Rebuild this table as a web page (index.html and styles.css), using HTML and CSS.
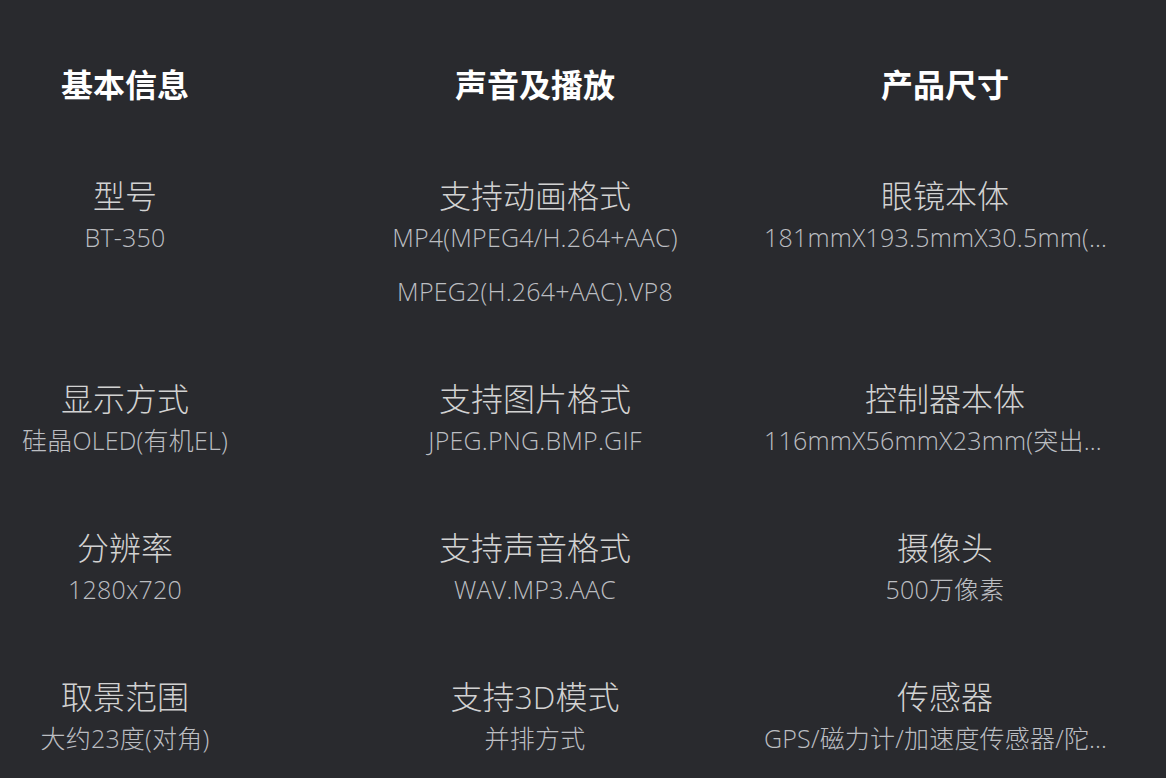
FILE: index.html
```html
<!DOCTYPE html>
<html lang="zh-CN">
<head>
<meta charset="utf-8">
<title>参数</title>
<link rel="stylesheet" href="styles.css">
</head>
<body>
<div class="specs">
  <h2 class="head">基本信息</h2>
  <h2 class="head">声音及播放</h2>
  <h2 class="head">产品尺寸</h2>

  <div class="item"><div class="title">型号</div><div class="value">BT-350</div></div>
  <div class="item"><div class="title">支持动画格式</div><div class="value">MP4(MPEG4/H.264+AAC)</div><div class="value">MPEG2(H.264+AAC).VP8</div></div>
  <div class="item"><div class="title">眼镜本体</div><div class="value">181mmX193.5mmX30.5mm(除突出部分)</div></div>

  <div class="item"><div class="title">显示方式</div><div class="value">硅晶OLED(有机EL)</div></div>
  <div class="item"><div class="title">支持图片格式</div><div class="value">JPEG.PNG.BMP.GIF</div></div>
  <div class="item"><div class="title">控制器本体</div><div class="value">116mmX56mmX23mm(突出部分除外)</div></div>

  <div class="item"><div class="title">分辨率</div><div class="value">1280x720</div></div>
  <div class="item"><div class="title">支持声音格式</div><div class="value">WAV.MP3.AAC</div></div>
  <div class="item"><div class="title">摄像头</div><div class="value">500万像素</div></div>

  <div class="item"><div class="title">取景范围</div><div class="value">大约23度(对角)</div></div>
  <div class="item"><div class="title">支持3D模式</div><div class="value">并排方式</div></div>
  <div class="item"><div class="title">传感器</div><div class="value">GPS/磁力计/加速度传感器/陀螺仪传感器</div></div>
</div>
</body>
</html>
```
FILE: styles.css
```css
html, body {
  margin: 0;
  padding: 0;
  background: #292a2e;
  overflow: hidden;
}
body {
  width: 1166px;
  height: 778px;
  font-family: "Open Sans", "Noto Sans CJK SC", sans-serif;
  font-weight: 300;
}
.specs {
  display: grid;
  grid-template-columns: repeat(3, 410px);
  row-gap: 67px;
  margin-left: -80px;
  padding-top: 58px;
}
.head {
  margin: 0;
  text-align: center;
  color: #ffffff;
  font-family: "Noto Sans CJK SC", sans-serif;
  font-size: 32px;
  font-weight: 700;
  line-height: 50px;
}
.item {
  padding: 0 24px;
  text-align: center;
  min-width: 0;
  display: flex;
  flex-direction: column;
  gap: 14px;
}
.title {
  color: #d2d2d2;
  font-size: 32px;
  line-height: 42px;
  margin-bottom: -14px;
}
.value {
  color: #bcbec2;
  font-size: 25px;
  letter-spacing: 0.2px;
  line-height: 40px;
  white-space: nowrap;
  overflow: hidden;
  text-overflow: ellipsis;
}
```
